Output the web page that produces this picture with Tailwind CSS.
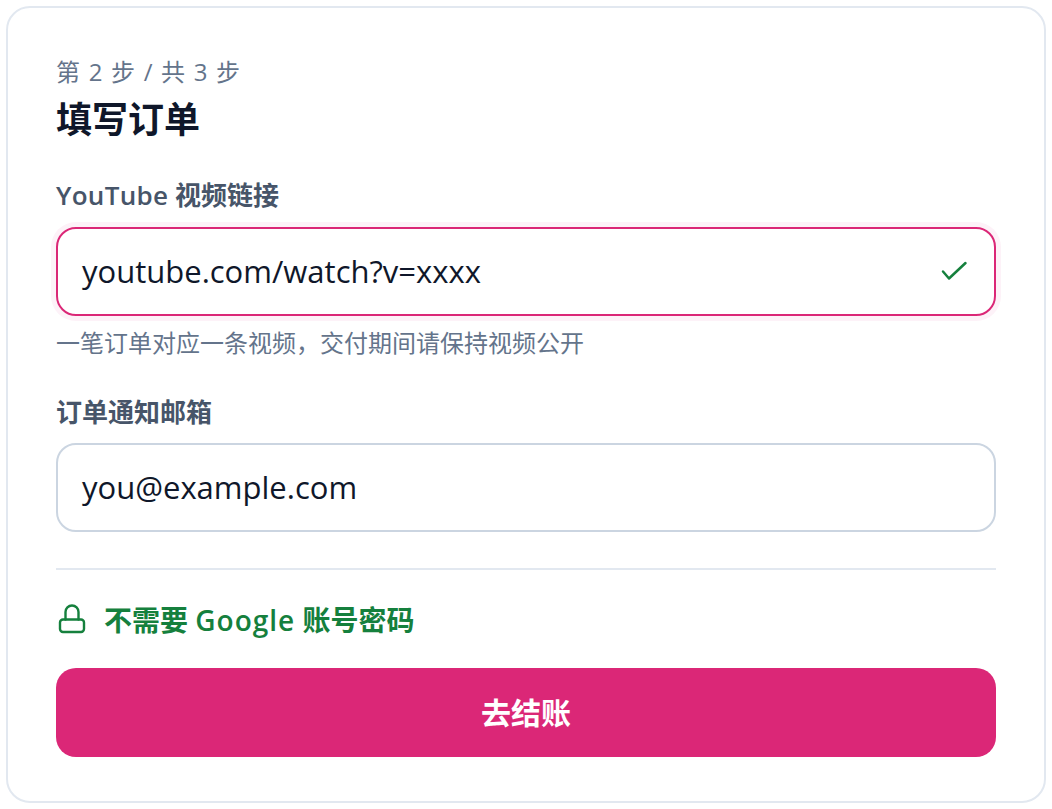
<!DOCTYPE html>
<html lang="zh-CN">
<head>
    <meta charset="UTF-8" />
    <title>填写订单</title>
    <script src="https://cdn.jsdelivr.net/npm/@tailwindcss/browser@4"></script>
</head>
<body class="bg-white font-['Open_Sans','Noto_Sans_CJK_SC',sans-serif]">

<div class="m-[6px] h-[797px] rounded-[24px] border-2 border-[#e2e8f0] bg-white px-[48px] pt-[46px]">
    <p class="text-[24px] leading-[36px] tracking-[1.2px] text-[#64748b]">第 2 步 / 共 3 步</p>
    <h1 class="mt-[6px] text-[36px] leading-[48px] font-bold text-[#0f172a]">填写订单</h1>

    <label class="mt-[31px] block text-[26px] leading-[40px] font-semibold text-[#475569]"><span class="tracking-[0.3px]">YouTube</span> 视频链接</label>
    <div class="mt-[12px] flex h-[89px] items-center justify-between rounded-[20px] border-2 border-[#db2777] px-[24px] shadow-[0_0_0_5px_#fdf2f8]">
        <span class="text-[31px] text-[#0f172a]">youtube.com/watch?v=xxxx</span>
        <svg class="h-[32px] w-[32px] text-[#15803d]" viewBox="0 0 32 32" fill="none" stroke="currentColor" stroke-width="2.5" stroke-linecap="round" stroke-linejoin="round"><path d="M5 15.500L11 22.500L27.500 7"/></svg>
    </div>
    <p class="mt-[9px] text-[24px] leading-[36px] text-[#64748b]">一笔订单对应一条视频，交付期间请保持视频公开</p>

    <label class="mt-[31px] block text-[26px] leading-[40px] font-semibold text-[#475569]">订单通知邮箱</label>
    <div class="mt-[11px] flex h-[89px] items-center rounded-[20px] border-2 border-[#cbd5e1] px-[24px]">
        <span class="text-[31px] text-[#0f172a]">you@example.com</span>
    </div>

    <div class="mt-[36px] border-t-2 border-[#e2e8f0]"></div>

    <div class="mt-[30px] flex items-center gap-[16px]">
        <svg class="h-[32px] w-[32px] text-[#15803d]" viewBox="0 0 32 32" fill="none" stroke="currentColor" stroke-width="2.400" stroke-linecap="round" stroke-linejoin="round"><rect x="4" y="15.500" width="24" height="12.500" rx="3"/><path d="M9.500 15.500V8a6.500 6.500 0 0 1 13 0v7.500"/></svg>
        <span class="text-[28px] leading-[40px] font-semibold text-[#15803d]">不需要 <span class="tracking-[1px]">Google</span> 账号密码</span>
    </div>

    <button class="mt-[28px] h-[89px] w-full rounded-[20px] bg-[#db2777] text-[30px] font-bold text-white">去结账</button>
</div>

</body>
</html>
